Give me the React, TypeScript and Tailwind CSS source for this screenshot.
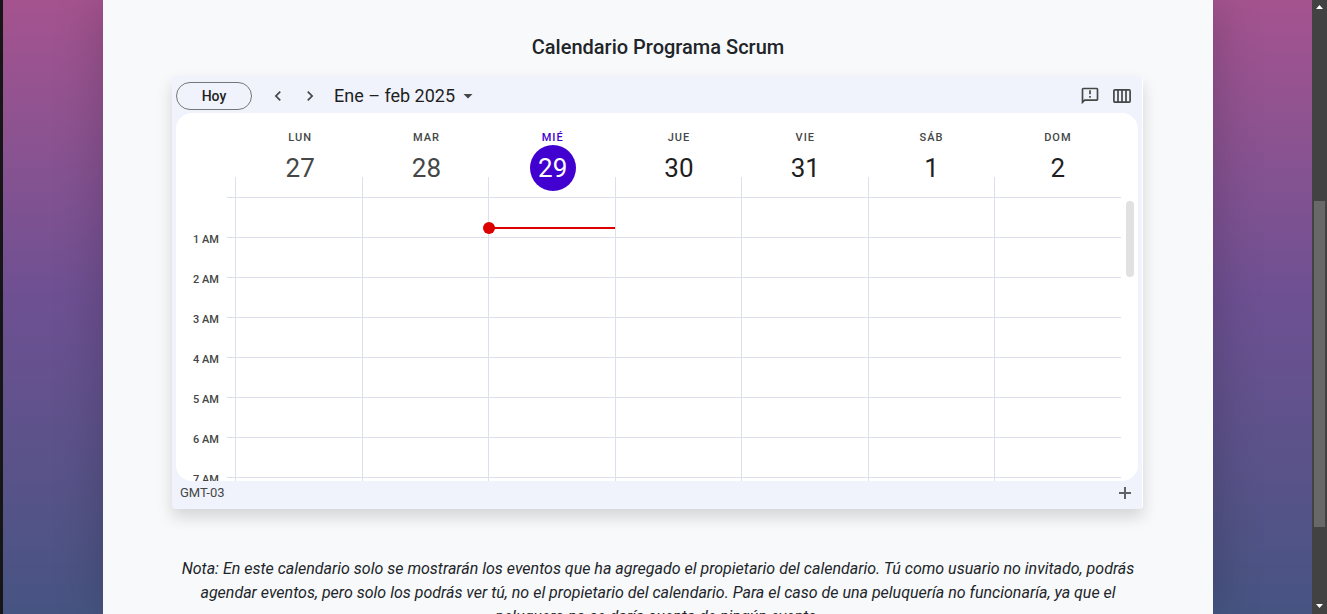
import React from "react";

type Day = { name: string; num: number; state: "past" | "today" | "future" };

const DAYS: Day[] = [
  { name: "LUN", num: 27, state: "past" },
  { name: "MAR", num: 28, state: "past" },
  { name: "MIÉ", num: 29, state: "today" },
  { name: "JUE", num: 30, state: "future" },
  { name: "VIE", num: 31, state: "future" },
  { name: "SÁB", num: 1, state: "future" },
  { name: "DOM", num: 2, state: "future" },
];

const HOURS = ["1 AM", "2 AM", "3 AM", "4 AM", "5 AM", "6 AM", "7 AM"];

const NUMBER_STYLES = {
  past: "text-[#444746]",
  today: "bg-[#4200d0] text-white",
  future: "text-[#1f1f1f]",
};

function IconButton({ label, children }: { label: string; children: React.ReactNode }) {
  return (
    <button type="button" aria-label={label} className="flex size-8 items-center justify-center text-[#444746]">
      {children}
    </button>
  );
}

function Toolbar() {
  return (
    <div className="flex h-[37px] items-center justify-between pt-0.5">
      <div className="flex items-center">
        <button
          type="button"
          className="h-7 w-[76px] rounded-full border border-[#747775] text-sm font-medium text-[#1f1f1f]"
        >
          Hoy
        </button>
        <div className="ml-2.5 flex">
          <IconButton label="Semana anterior">
            <svg viewBox="0 0 24 24" className="size-5" fill="currentColor">
              <path d="M15.41 7.41 14 6l-6 6 6 6 1.41-1.41L10.83 12z" />
            </svg>
          </IconButton>
          <IconButton label="Semana siguiente">
            <svg viewBox="0 0 24 24" className="size-5" fill="currentColor">
              <path d="M10 6 8.59 7.41 13.17 12l-4.58 4.59L10 18l6-6z" />
            </svg>
          </IconButton>
        </div>
        <button type="button" className="ml-2 flex items-center gap-[3px] text-lg text-[#1f1f1f]">
          Ene – feb 2025
          <svg viewBox="0 0 20 20" className="size-5" fill="#444746">
            <path d="M5.500 8h9L10 12.500z" />
          </svg>
        </button>
      </div>
      <div className="flex">
        <IconButton label="Enviar comentarios">
          <svg viewBox="0 0 24 24" className="size-5" fill="currentColor">
            <path d="M20 2H4c-1.1 0-1.99.9-1.99 2L2 22l4-4h14c1.1 0 2-.9 2-2V4c0-1.1-.9-2-2-2zm0 14H5.17L4 17.17V4h16v12zM11 5h2v5h-2zm0 7h2v2h-2z" />
          </svg>
        </IconButton>
        <IconButton label="Vista de semana">
          <svg viewBox="0 0 18 14" className="h-3.5 w-[18px]" fill="none" stroke="currentColor" strokeWidth="1.7">
            <rect x="0.9" y="0.9" width="16.2" height="12.2" rx="1" />
            <path d="M5 1v12M9 1v12M13 1v12" />
          </svg>
        </IconButton>
      </div>
    </div>
  );
}

function WeekView() {
  return (
    <div className="relative h-[368px] overflow-hidden rounded-2xl bg-white pr-[17px]">
      <div className="ml-[61px] grid grid-cols-7">
        {DAYS.map((day) => (
          <div key={day.name} className="flex h-[84px] flex-col items-center pt-4">
            <span
              className={`h-4 text-[11px] leading-[18px] font-medium tracking-[1px] ${
                day.state === "today" ? "text-[#4200d0]" : "text-[#444746]"
              }`}
            >
              {day.name}
            </span>
            <span
              className={`flex size-[46px] items-center justify-center rounded-full text-[26px] leading-none ${NUMBER_STYLES[day.state]}`}
            >
              {day.num}
            </span>
          </div>
        ))}
      </div>

      <div className="flex">
        <div className="w-[51px] shrink-0 pt-[35px] pr-2">
          {HOURS.map((hour) => (
            <div key={hour} className="h-10 text-right text-[11px] leading-4 font-medium text-[#444746]">
              {hour}
            </div>
          ))}
        </div>
        <div className="w-2 shrink-0">
          <div className="h-10 border-t border-[#dde0ea]" />
          {HOURS.map((hour) => (
            <div key={hour} className="h-10 border-t border-[#dde0ea]" />
          ))}
        </div>
        <div className="grid flex-1 grid-cols-7">
          {DAYS.map((day) => (
            <div key={day.name} className="relative">
              <div className="absolute -top-5 bottom-0 left-0 w-px bg-[#dde0ea]" />
              <div className="h-10 border-t border-[#dde0ea]" />
              {HOURS.map((hour) => (
                <div key={hour} className="h-10 border-t border-[#dde0ea]" />
              ))}
              {day.state === "today" && (
                <div className="absolute top-[30px] right-0 left-0 h-0.5 bg-[#dc0000]">
                  <div className="absolute -top-[5px] -left-[5px] size-3 rounded-full bg-[#dc0000]" />
                </div>
              )}
            </div>
          ))}
        </div>
      </div>

      <div className="absolute top-[88px] right-1 h-[76px] w-2 rounded-full bg-[#e1e1e1]" />
    </div>
  );
}

export default function App() {
  return (
    <div className="flex h-screen overflow-hidden bg-[#161616] pl-[3px] font-[Roboto,sans-serif] text-[#212529]">
      <div className="flex min-w-0 flex-1 bg-linear-to-b from-[#a5538f] via-[#6e5092] via-48% to-[#465482] px-[100px] pr-[99px]">
        <main className="flex-1 bg-[#f8f9fb] px-[69px] shadow-[0_0_48px_rgba(0,0,0,0.2)]">
          <h2 className="pt-[35px] text-center text-xl leading-6 font-medium">Calendario Programa Scrum</h2>

          <section
            aria-label="Calendario"
            className="mt-[17px] mr-px rounded border-r border-white bg-[#f0f3fb] px-1 shadow-[0_8px_16px_rgba(0,0,0,0.15)]"
          >
            <Toolbar />
            <WeekView />
            <div className="flex h-7 items-center justify-between pb-1">
              <span className="pl-1 text-[13px] text-[#444746]">GMT-03</span>
              <button type="button" aria-label="Agregar" className="mr-[3px] flex size-5 items-center justify-center">
                <svg viewBox="0 0 12 12" className="size-3" fill="#5f6368">
                  <path d="M5 0h2v5h5v2H7v5H5V7H0V5h5z" />
                </svg>
              </button>
            </div>
          </section>

          <p className="mt-12 text-center text-base leading-6 italic">
            Nota: En este calendario solo se mostrarán los eventos que ha agregado el propietario del calendario. Tú
            como usuario no invitado, podrás agendar eventos, pero solo los podrás ver tú, no el propietario del
            calendario. Para el caso de una peluquería no funcionaría, ya que el peluquero no se daría cuenta de ningún
            evento.
          </p>
        </main>
      </div>

      <div aria-hidden="true" className="flex w-[15px] shrink-0 flex-col items-center bg-[#424242]">
        <svg viewBox="0 0 15 15" className="size-[15px]" fill="white">
          <path d="M4 9h7L7.500 5z" />
        </svg>
        <div className="mt-[186px] h-[326px] w-[11px] bg-[#686868]" />
        <svg viewBox="0 0 15 15" className="mt-auto size-[15px]" fill="white">
          <path d="M4 5h7L7.500 9z" />
        </svg>
      </div>
    </div>
  );
}
